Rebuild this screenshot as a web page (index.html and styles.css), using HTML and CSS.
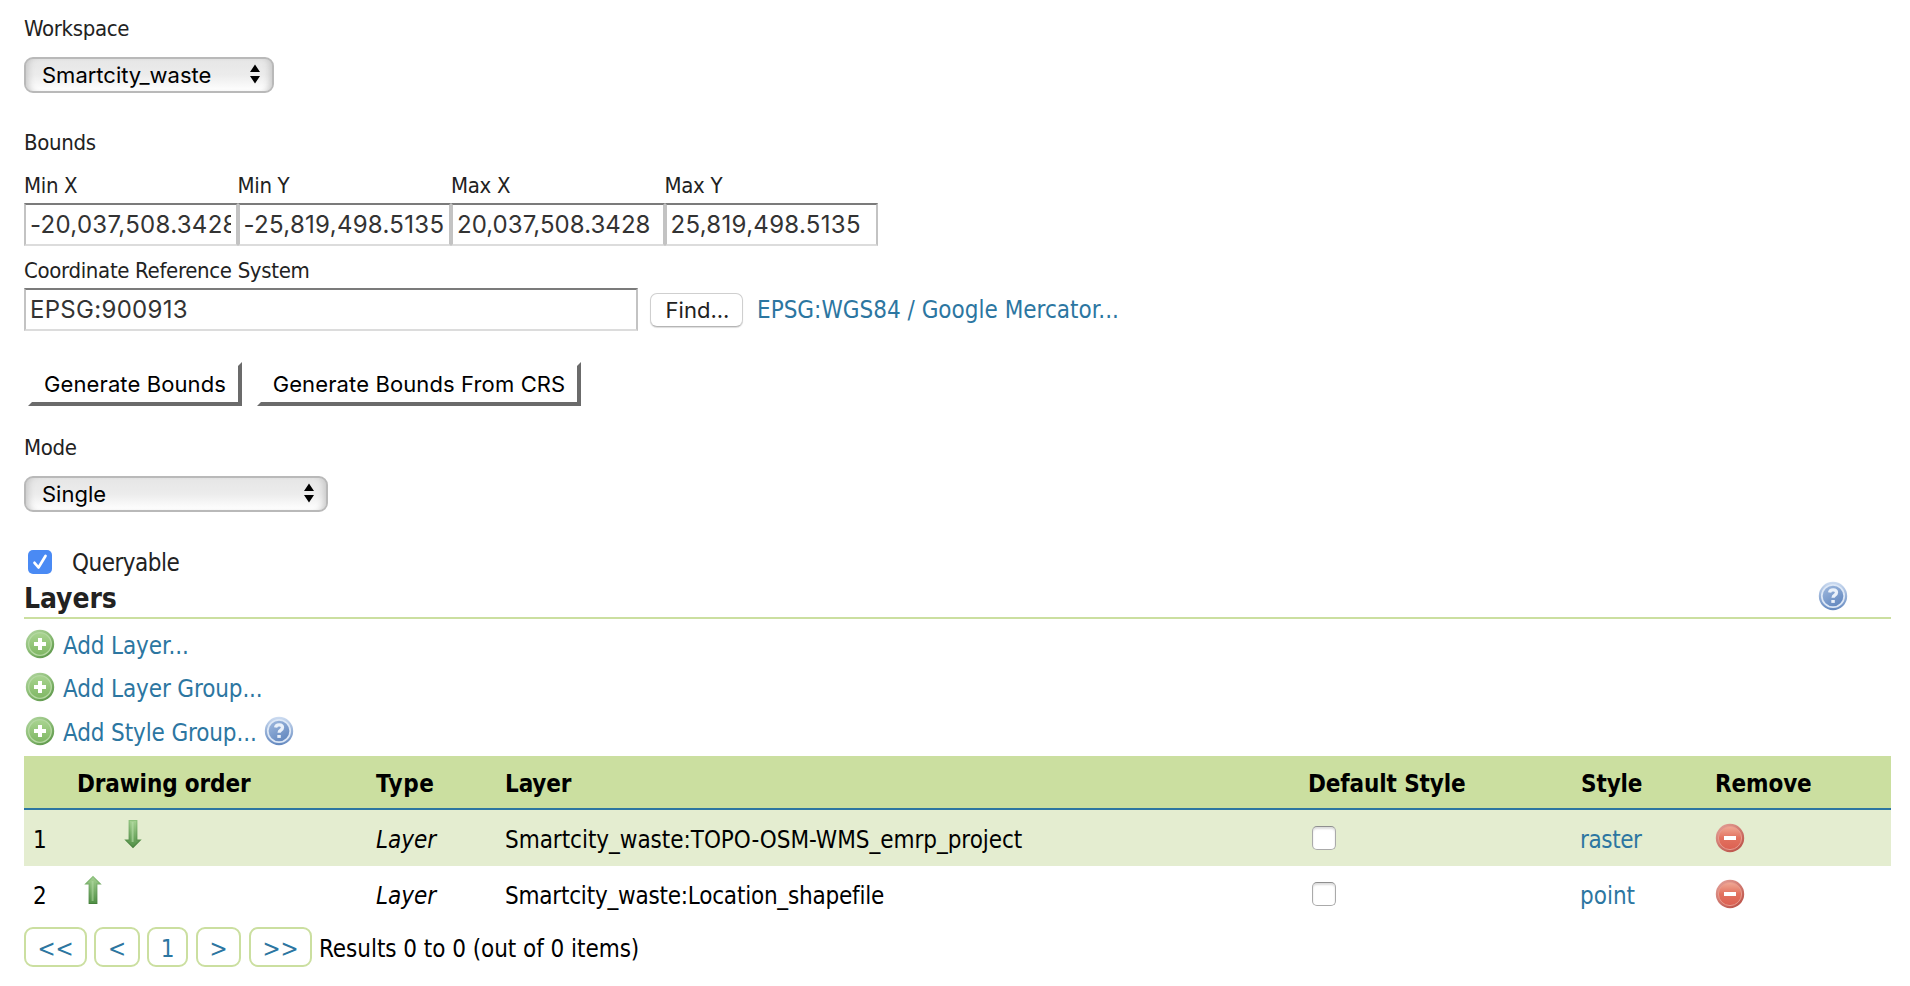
FILE: index.html
```
<!DOCTYPE html>
<html lang="en">
<head>
<meta charset="utf-8">
<title>Layer group</title>
<link rel="stylesheet" href="styles.css">
</head>
<body>
<svg class="defs" width="0" height="0" aria-hidden="true">
  <defs>
    <linearGradient id="green" x1="0" y1="0" x2=".7" y2="1"><stop offset="0" stop-color="#b5d8a4"/><stop offset=".5" stop-color="#8fbf79"/><stop offset="1" stop-color="#5f994c"/></linearGradient>
    <linearGradient id="greenIn" x1="0" y1="0" x2="0" y2="1"><stop offset="0" stop-color="#a9d491"/><stop offset="1" stop-color="#7fb764"/></linearGradient>
    <linearGradient id="greenArrow" x1="0" y1="0" x2="0" y2="1"><stop offset="0" stop-color="#a5d192"/><stop offset="1" stop-color="#4f8f44"/></linearGradient>
    <linearGradient id="greenEdge" x1="0" y1="0" x2="0" y2="1"><stop offset="0" stop-color="#8cc07c"/><stop offset="1" stop-color="#44803a"/></linearGradient>
    <linearGradient id="blue" x1="0" y1="0" x2="0" y2="1"><stop offset="0" stop-color="#cddcf1"/><stop offset="1" stop-color="#6388bf"/></linearGradient>
    <linearGradient id="blueIn" x1="0" y1="0" x2=".6" y2="1"><stop offset="0" stop-color="#a3bce0"/><stop offset="1" stop-color="#6489c0"/></linearGradient>
    <linearGradient id="red" x1="0" y1="0" x2=".7" y2="1"><stop offset="0" stop-color="#e6a59c"/><stop offset="1" stop-color="#bd544a"/></linearGradient>
    <linearGradient id="redIn" x1="0" y1="0" x2="0" y2="1"><stop offset="0" stop-color="#f0a995"/><stop offset=".5" stop-color="#e2725f"/><stop offset="1" stop-color="#dc6052"/></linearGradient>
    <symbol id="add" viewBox="0 0 30 30">
      <circle cx="15" cy="15" r="14.2" fill="url(#green)"/>
      <circle cx="15" cy="15" r="11.3" fill="url(#greenIn)" stroke="#b4d8a1" stroke-width="1.3"/>
      <path d="M15 9v12M9 15h12" stroke="#fff" stroke-width="4"/>
    </symbol>
    <symbol id="help" viewBox="0 0 30 30">
      <circle cx="15" cy="15" r="14.2" fill="url(#blue)"/>
      <circle cx="15" cy="15" r="11.2" fill="url(#blueIn)" stroke="#dce7f6" stroke-width="1.7"/>
      <path d="M11.6 11.4c.6-3.6 6.9-3.4 6.9.2 0 2.7-3.4 2.4-3.4 5.2" fill="none" stroke="#eaf1fa" stroke-width="3.3"/>
      <path d="M13.3 19h3.5v2.9h-3.5z" fill="#eaf1fa"/>
    </symbol>
    <symbol id="remove" viewBox="0 0 30 30">
      <circle cx="15" cy="15" r="14.2" fill="url(#red)"/>
      <circle cx="15" cy="15" r="11.6" fill="url(#redIn)" stroke="#e89b8e" stroke-width="1"/>
      <path d="M9 15h12" stroke="#fff" stroke-width="4"/>
    </symbol>
    <symbol id="down" viewBox="0 0 18 30">
      <path d="M5.2 1.5h7.6v19.5h3.5L9 28.5 1.7 21h3.5z" fill="url(#greenArrow)" stroke="url(#greenEdge)" stroke-width="1.2"/>
      <path d="M8.6 3v20" stroke="#b9deaa" stroke-width="2" opacity=".6"/>
    </symbol>
    <symbol id="up" viewBox="0 0 18 30">
      <path d="M5.2 28.5h7.6V9h3.5L9 1.5 1.7 9h3.5z" fill="url(#greenArrow)" stroke="url(#greenEdge)" stroke-width="1.2"/>
      <path d="M8.6 6v20" stroke="#b9deaa" stroke-width="2" opacity=".5"/>
    </symbol>
    <symbol id="sort" viewBox="0 0 10 20"><path d="M5 .5l5 7.5H0zM5 19.5L0 12h10z"/></symbol>
  </defs>
</svg>
<main class="page">
  <div class="label ws">Workspace</div>
  <div class="select select-ws"><span>Smartcity_waste</span><svg class="sort"><use href="#sort"/></svg></div>

  <div class="label bounds-title">Bounds</div>
  <div class="bounds">
    <div class="bound"><div class="label">Min X</div><div class="field"><span class="clip">-20,037,508.3428</span></div></div>
    <div class="bound"><div class="label">Min Y</div><div class="field"><span class="clip">-25,819,498.5135</span></div></div>
    <div class="bound"><div class="label">Max X</div><div class="field"><span class="clip clip-x">20,037,508.3428</span></div></div>
    <div class="bound"><div class="label">Max Y</div><div class="field"><span class="clip">25,819,498.5135</span></div></div>
  </div>

  <div class="label crs-title">Coordinate Reference System</div>
  <div class="crs">
    <div class="field field-crs"><span>EPSG:900913</span></div>
    <button class="find">Find...</button>
    <a class="link crs-link">EPSG:WGS84 / Google Mercator...</a>
  </div>
  <div class="actions">
    <button class="generate generate-a">Generate Bounds</button>
    <button class="generate generate-b">Generate Bounds From CRS</button>
  </div>

  <div class="label mode-title">Mode</div>
  <div class="select select-mode"><span>Single</span><svg class="sort"><use href="#sort"/></svg></div>

  <div class="query">
    <span class="check"><svg viewBox="0 0 24 24"><path d="M6.5 12.8l4 4.7 7-11.5" fill="none" stroke="#fff" stroke-width="2.7" stroke-linecap="round" stroke-linejoin="round"/></svg></span>
    <span class="query-text">Queryable</span>
  </div>

  <div class="section"><h3>Layers</h3><svg class="icon"><use href="#help"/></svg></div>
  <div class="adds">
    <div class="add"><svg class="icon"><use href="#add"/></svg><a class="link">Add Layer...</a></div>
    <div class="add"><svg class="icon"><use href="#add"/></svg><a class="link">Add Layer Group...</a></div>
    <div class="add"><svg class="icon"><use href="#add"/></svg><a class="link">Add Style Group...</a><svg class="icon"><use href="#help"/></svg></div>
  </div>

  <div class="row head"><span></span><b>Drawing order</b><b class="type">Type</b><b>Layer</b><b>Default Style</b><b>Style</b><b>Remove</b></div>
  <div class="row odd">
    <span class="num">1</span><svg class="arrow arrow-down"><use href="#down"/></svg><i>Layer</i>
    <span class="topo">Smartcity_waste:TOPO-OSM-WMS_emrp_project</span><span class="box"></span><a class="link raster">raster</a><svg class="icon"><use href="#remove"/></svg>
  </div>
  <div class="row">
    <span class="num">2</span><svg class="arrow arrow-up"><use href="#up"/></svg><i>Layer</i>
    <span class="location">Smartcity_waste:Location_shapefile</span><span class="box"></span><a class="link">point</a><svg class="icon"><use href="#remove"/></svg>
  </div>

  <div class="pager">
    <a class="pg pg-first">&lt;&lt;</a><a class="pg pg-prev">&lt;</a><a class="pg pg-one">1</a><a class="pg pg-next">&gt;</a><a class="pg pg-last">&gt;&gt;</a>
    <span class="results">Results 0 to 0 (out of 0 items)</span>
  </div>
</main>
</body>
</html>
```
FILE: styles.css
```
* { box-sizing: border-box; }
body { margin: 0; background: #fff; color: #222; font: 24px/30px "DejaVu Sans Condensed", "DejaVu Sans", sans-serif; white-space: nowrap; overflow: hidden; }
.defs { display: block; }
.page { padding: 13px 19px 0 24px; }
.label { height: 30px; padding-top: 1px; font-size: 22px; line-height: 30px; letter-spacing: -.33px; }
.link { color: #2c76a1; }
.icon { width: 30px; height: 30px; flex: none; display: block; }

.select { display: flex; align-items: center; justify-content: space-between; height: 36px; margin-top: 14px; padding: 0 12px 0 16px; border: 2px solid #b9b9b9; border-radius: 9px; background: linear-gradient(#e6e6e6, #ececec 50%, #fff); box-shadow: inset 7px 0 7px -5px #c4c4c4, inset -7px 0 7px -5px #c4c4c4; color: #000; font: 22px/32px Inter, sans-serif; }
.select-ws { width: 250px; }
.select-mode { width: 304px; }
.sort { width: 10px; height: 20px; margin-top: -2px; }

.bounds-title { margin-top: 34px; }
.bounds { display: flex; margin-top: 13px; }
.bound { width: 213.5px; }
.field { display: flex; align-items: center; height: 43px; margin-top: 3px; padding: 0 5px 0 4px; border: 2px solid #c3c3c3; border-top-color: #7b7b7b; border-bottom-color: #dcdcdc; background: #fff; color: #333; font: 24px/34px Inter, sans-serif; }
.clip { overflow: hidden; letter-spacing: .3px; }
.clip-x { letter-spacing: .05px; }

.crs-title { margin-top: 9px; }
.crs { display: flex; align-items: center; margin-top: 3px; }
.field-crs { width: 614px; margin-top: 0; padding-top: 1px; letter-spacing: .3px; }
.find { width: 93px; height: 34px; margin: 0 0 0 12px; padding: 0 0 0 2px; border: 1px solid #cfcfcf; border-bottom-color: #b5b5b5; border-radius: 7px; background: #fff; box-shadow: 0 1px 1px #ddd; color: #222; font: 22px/32px Inter, sans-serif; }
.crs-link { margin-left: 14px; padding-top: 1px; }
.actions { display: flex; gap: 15px; margin: 31px 0 0 4px; }
.generate { height: 44px; padding: 0; border: 4px solid #fff; border-right-color: #6b6b6b; border-bottom-color: #6b6b6b; background: #fff; color: #000; font: 22px/36px Inter, sans-serif; }
.generate-a { width: 214px; letter-spacing: .1px; }
.generate-b { width: 324px; letter-spacing: .12px; }

.mode-title { margin-top: 26px; }
.query { display: flex; align-items: center; height: 30px; margin-top: 36px; padding-left: 4px; }
.check { width: 24px; height: 24px; margin-top: -2px; border-radius: 5px; background: #4a8af4; }
.check svg { display: block; width: 24px; height: 24px; }
.query-text { margin-left: 20px; letter-spacing: -.5px; }

.section { display: flex; align-items: flex-start; justify-content: space-between; height: 38px; margin-top: 3px; padding-right: 43px; border-bottom: 2px solid #cbdfa0; }
h3 { margin: 0; padding-top: 1px; font-size: 28px; line-height: 34px; letter-spacing: -.05px; }

.adds { padding: 3px 0; }
.add { display: flex; align-items: center; height: 43.67px; padding-left: 1px; }
.add .link { padding-top: 4px; margin: 0 7px 0 8px; letter-spacing: -.13px; }

.row { display: grid; grid-template-columns: 53px 299px 129px 803px 273px 134px 1fr; align-items: center; height: 56px; color: #000; }
.row > span:not(.box), .row > b, .row > i, .row > .link { padding-top: 5px; }
.row > b { letter-spacing: -.12px; }
.row > .type { letter-spacing: .6px; }
.row > .link { margin-left: -1px; }
.row .num { padding-left: 9px; }
.head { height: 54px; background: #cbdfa0; border-bottom: 2px solid #2c76a1; }
.odd { background: #e4edd0; }
.raster { letter-spacing: -.4px; }
.topo { letter-spacing: -.04px; }
.location { letter-spacing: -.22px; }
.arrow { width: 18px; height: 30px; margin-top: -8px; }
.arrow-down { margin-left: 47px; }
.arrow-up { margin-left: 7px; }
.box { width: 24px; height: 24px; margin-left: 4px; border: 1px solid #aaa; border-top-color: #8f8f8f; border-radius: 5px; background: #fff; box-shadow: inset 0 2px 2px #ddd; }

.pager { display: flex; align-items: center; height: 40px; margin-top: 5px; color: #000; }
.pg { height: 40px; padding-top: 5px; border: 2px solid #cbdfa0; border-radius: 9px; color: #2c76a1; text-align: center; line-height: 30px; }
.pg-first { width: 63px; margin-right: 7px; }
.pg-prev { width: 46px; margin-right: 7px; }
.pg-one { width: 41px; margin-right: 8px; }
.pg-next { width: 45px; margin-right: 8px; }
.pg-last { width: 63px; }
.results { margin-left: 7px; padding-top: 4px; letter-spacing: -.05px; }
```
